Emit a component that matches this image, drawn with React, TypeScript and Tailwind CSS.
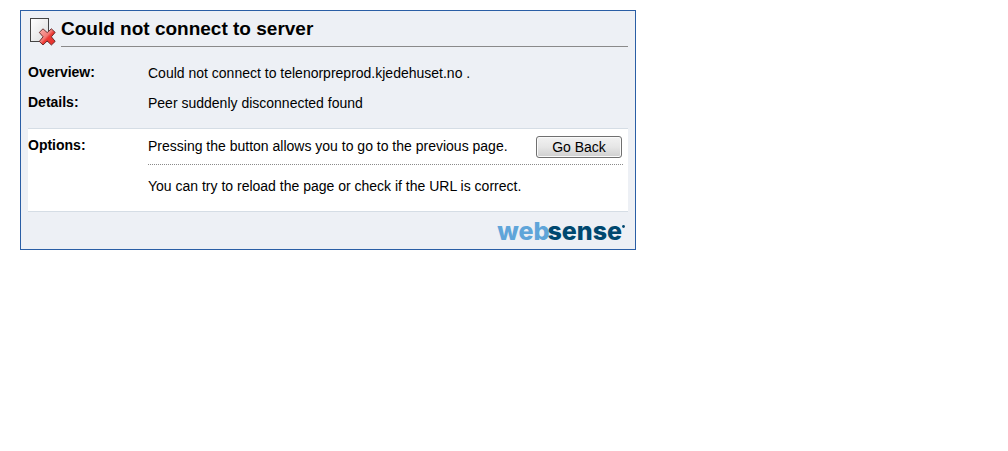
import type { ReactNode } from "react";

function ErrorIcon() {
  return (
    <svg width="28" height="30" viewBox="0 0 28 30" aria-hidden="true" className="shrink-0">
      <defs>
        <linearGradient id="paper" x1="0" y1="0" x2="1" y2="1">
          <stop offset="0" stopColor="#ffffff" />
          <stop offset="1" stopColor="#dcdcdc" />
        </linearGradient>
        <linearGradient id="cross" x1="0" y1="0" x2="1" y2="1">
          <stop offset="0" stopColor="#f9b0ac" />
          <stop offset="0.45" stopColor="#f27a75" />
          <stop offset="0.55" stopColor="#ec3b36" />
          <stop offset="1" stopColor="#e6302b" />
        </linearGradient>
      </defs>
      <rect x="2.5" y="2.5" width="18" height="23" fill="url(#paper)" stroke="#444444" />
      <path
        d="M15 12.8L19.2 16.6L23.4 12.8L27.2 16.4L23.4 20.8L27.2 25.4L23.4 29L19.2 25L15 29L11.3 25.4L15.1 20.8L11.3 16.4Z"
        fill="url(#cross)"
        stroke="#5e2626"
        strokeWidth="0.9"
        strokeLinejoin="round"
      />
    </svg>
  );
}

function Row({ label, children }: { label: string; children: ReactNode }) {
  return (
    <div className="flex">
      <dt className="w-[120px] shrink-0 font-bold leading-4">{label}</dt>
      <dd className="min-w-0 flex-1 leading-[18px]">{children}</dd>
    </div>
  );
}

export default function App() {
  return (
    <div className="min-h-screen bg-white px-5 py-[10px] font-['Liberation_Sans',Arial,sans-serif] text-sm text-black">
      <main className="max-w-[616px] border border-[#2a5ea5] bg-[#edf0f5] px-[7px]">
        <header className="flex gap-[5px] pt-[5px]">
          <ErrorIcon />
          <h1 className="h-[31px] flex-1 border-b border-[#8a8a8a] text-[19px] font-bold leading-[26px]">
            Could not connect to server
          </h1>
        </header>
        <dl className="mt-[17px]">
          <div className="flex flex-col gap-3 pb-4">
            <Row label="Overview:">Could not connect to telenorpreprod.kjedehuset.no .</Row>
            <Row label="Details:">Peer suddenly disconnected found</Row>
          </div>
          <div className="border-y border-[#d5dde5] bg-white pb-4 pr-[5px] pt-2">
            <Row label="Options:">
              <div className="-mt-px flex items-start justify-between border-b border-dotted border-[#8a8a8a] pb-[6px]">
                <span className="pt-px">Pressing the button allows you to go to the previous page.</span>
                <button
                  type="button"
                  onClick={() => window.history.back()}
                  className="mr-px h-[22px] w-[86px] shrink-0 rounded-[3px] border border-[#707070] bg-linear-to-b from-[#f2f2f2] via-[#e6e6e6] to-[#cfcfcf] leading-5 shadow-[inset_0_0_0_1px_#fafafa]"
                >
                  Go Back
                </button>
              </div>
              <p className="pt-3">You can try to reload the page or check if the URL is correct.</p>
            </Row>
          </div>
        </dl>
        <footer className="flex h-[37px] items-center justify-end pr-[3px]">
          <div className="flex font-['Inter',sans-serif] text-[25px] font-extrabold leading-9">
            <span className="text-[#5fa5d9]">web</span>
            <span className="-ml-0.5 text-[#00486f]">sense</span>
            <svg width="3" height="3" viewBox="0 0 3 3" aria-hidden="true" className="mt-3">
              <circle cx="1.5" cy="1.5" r="1.4" fill="#00486f" />
            </svg>
          </div>
        </footer>
      </main>
    </div>
  );
}
